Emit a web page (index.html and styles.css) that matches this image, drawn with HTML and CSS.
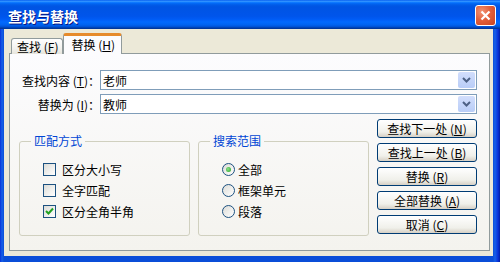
FILE: index.html
```html
<!DOCTYPE html>
<html lang="zh-CN">
<head>
  <meta charset="UTF-8" />
  <title>查找与替换</title>
  <link rel="stylesheet" href="styles.css">
</head>
<body>
<div class="window">
  <div class="titlebar">
    <span class="title">查找与替换</span>
    <span class="close">
      <svg width="11" height="11" viewBox="0 0 11 11"><path d="M1.5 1.5 L9.5 9.5 M9.5 1.5 L1.5 9.5" stroke="#fff" stroke-width="2.2" fill="none"/></svg>
    </span>
  </div>

  <div class="client">
    <div class="tabs">
      <div class="tab">查找 (<u>F</u>)</div>
      <div class="tab active">替换 (<u>H</u>)</div>
    </div>

    <div class="panel">
      <div class="field">
        <label>查找内容 (<u>T</u>)：</label>
        <div class="combo">
          <span class="value">老师</span>
          <span class="drop"><svg width="9" height="6" viewBox="0 0 9 6"><path d="M1 1 L4.5 4.5 L8 1" stroke="#4d6185" stroke-width="2" fill="none"/></svg></span>
        </div>
      </div>
      <div class="field">
        <label>替换为 (<u>I</u>)：</label>
        <div class="combo">
          <span class="value">教师</span>
          <span class="drop"><svg width="9" height="6" viewBox="0 0 9 6"><path d="M1 1 L4.5 4.5 L8 1" stroke="#4d6185" stroke-width="2" fill="none"/></svg></span>
        </div>
      </div>

      <div class="lower">
        <fieldset class="group">
          <legend>匹配方式</legend>
          <div class="options checks">
            <div class="opt"><span class="check"></span>区分大小写</div>
            <div class="opt"><span class="check"></span>全字匹配</div>
            <div class="opt"><span class="check on"><svg width="11" height="11" viewBox="0 0 11 11"><path d="M2 5 L4.5 7.5 L9 2.5" stroke="#21a121" stroke-width="2" fill="none"/></svg></span>区分全角半角</div>
          </div>
        </fieldset>

        <fieldset class="group">
          <legend>搜索范围</legend>
          <div class="options radios">
            <div class="opt"><span class="radio on"></span>全部</div>
            <div class="opt"><span class="radio"></span>框架单元</div>
            <div class="opt"><span class="radio"></span>段落</div>
          </div>
        </fieldset>

        <div class="buttons">
          <button>查找下一处 (<u>N</u>)</button>
          <button>查找上一处 (<u>B</u>)</button>
          <button>替换 (<u>R</u>)</button>
          <button>全部替换 (<u>A</u>)</button>
          <button>取消 (<u>C</u>)</button>
        </div>
      </div>
    </div>
  </div>
</div>
</body>
</html>
```

FILE: styles.css
```css
* {
  box-sizing: border-box;
}

body {
  margin: 0;
  width: 500px;
  height: 262px;
  overflow: hidden;
  background: #fff;
  font-family: "Noto Sans CJK SC", "DejaVu Sans", sans-serif;
  font-size: 12px;
  color: #000;
}

.window {
  width: 500px;
  height: 262px;
  display: flex;
  flex-direction: column;
  background: linear-gradient(to right, #0831d9 0, #1660e8 2px, #0a4ed8 4px, #0a4ed8 493px, #1660e8 495px, #0831d9 498px, #001ea0 500px);
}

.titlebar {
  flex-shrink: 0;
  height: 29px;
  display: flex;
  align-items: center;
  justify-content: space-between;
  padding: 0 4px 0 8px;
  background: linear-gradient(to bottom, #0058ee 0%, #3593ff 4%, #288eff 6%, #127dff 8%, #036ffc 10%, #0262ee 14%, #0057e5 20%, #0054e3 24%, #0055eb 56%, #005bf5 66%, #026afe 76%, #0062ef 86%, #0052d6 92%, #0040ab 96%, #003092 100%);
}

.title {
  color: #fff;
  font-weight: bold;
  font-size: 14px;
  padding-top: 2px;
  text-shadow: 1px 1px #0a1883;
}

.close {
  width: 21px;
  height: 21px;
  border: 1px solid #fff;
  border-radius: 3px;
  display: flex;
  align-items: center;
  justify-content: center;
  background: radial-gradient(circle at 30% 30%, #f29374 0%, #e2603c 45%, #c7431f 100%);
  margin-top: 1px;
}

.client {
  flex: 1;
  margin: 0 7px 6px 4px;
  background: #ece9d8;
  padding: 4px 3px 0 5px;
}

.tabs {
  display: flex;
  align-items: flex-end;
  padding-left: 2px;
  margin-bottom: -1px;
  position: relative;
  z-index: 1;
}

.tab {
  height: 16px;
  line-height: 15px;
  padding: 0 4px 0 5px;
  border: 1px solid #919b9c;
  border-bottom: none;
  border-radius: 3px 3px 0 0;
  background: linear-gradient(#ffffff, #f3f3ef 60%, #e7e6dd);
}

.tab.active {
  height: 21px;
  line-height: 17px;
  padding: 0 6px 0 7px;
  border-top: 3px solid #ffc83c;
  border-color: #e68b2c #919b9c #919b9c;
  background: #fcfcfe;
}

.panel {
  height: 198px;
  border: 1px solid #919b9c;
  background: linear-gradient(#fcfcfe, #f4f3ee);
  padding: 16px 12px 0 0;
}

.field {
  display: flex;
  align-items: center;
  margin-bottom: 4px;
}

.field label {
  width: 90px;
  text-align: right;
}

.combo {
  flex: 1;
  height: 20px;
  border: 1px solid #7f9db9;
  background: #fff;
  display: flex;
  align-items: center;
  justify-content: space-between;
  padding: 0 1px 0 2px;
}

.drop {
  width: 17px;
  height: 16px;
  border-radius: 2px;
  background: linear-gradient(#d2defc, #b9cdf7);
  display: flex;
  align-items: center;
  justify-content: center;
}

.lower {
  display: flex;
  gap: 8px;
  margin: 5px 0 0 9px;
}

.group {
  width: 172px;
  height: 102px;
  margin: 15px 0 0 0;
  padding: 0 0 0 11px;
  border: 1px solid #d0d0bf;
  border-radius: 3px;
}

.group legend {
  color: #0046d5;
  padding: 0 3px;
  line-height: 14px;
}

.options {
  display: flex;
  flex-direction: column;
  gap: 8px;
  padding: 15px 0 0 12px;
}

.opt {
  display: flex;
  align-items: center;
  height: 13px;
}

.check {
  width: 13px;
  height: 13px;
  border: 1px solid #1c5180;
  background: linear-gradient(135deg, #dcdcd7, #ffffff);
  margin-right: 6px;
  display: flex;
  align-items: center;
  justify-content: center;
}

.radio {
  width: 13px;
  height: 13px;
  border: 1px solid #1c5180;
  border-radius: 50%;
  background: linear-gradient(135deg, #dcdcd7, #ffffff);
  margin-right: 3px;
  display: flex;
  align-items: center;
  justify-content: center;
}

.radio.on::after {
  content: "";
  width: 5px;
  height: 5px;
  border-radius: 50%;
  background: radial-gradient(circle at 40% 40%, #8ce28c, #21a121);
}

.buttons {
  display: flex;
  flex-direction: column;
  gap: 5px;
}

.buttons button {
  width: 100px;
  height: 19px;
  padding: 0;
  border: 1px solid #003c74;
  border-radius: 3px;
  background: linear-gradient(#ffffff, #f0f0ea 70%, #d6d0c5);
  font-family: inherit;
  font-size: 12px;
  color: #000;
  line-height: 17px;
}
```
